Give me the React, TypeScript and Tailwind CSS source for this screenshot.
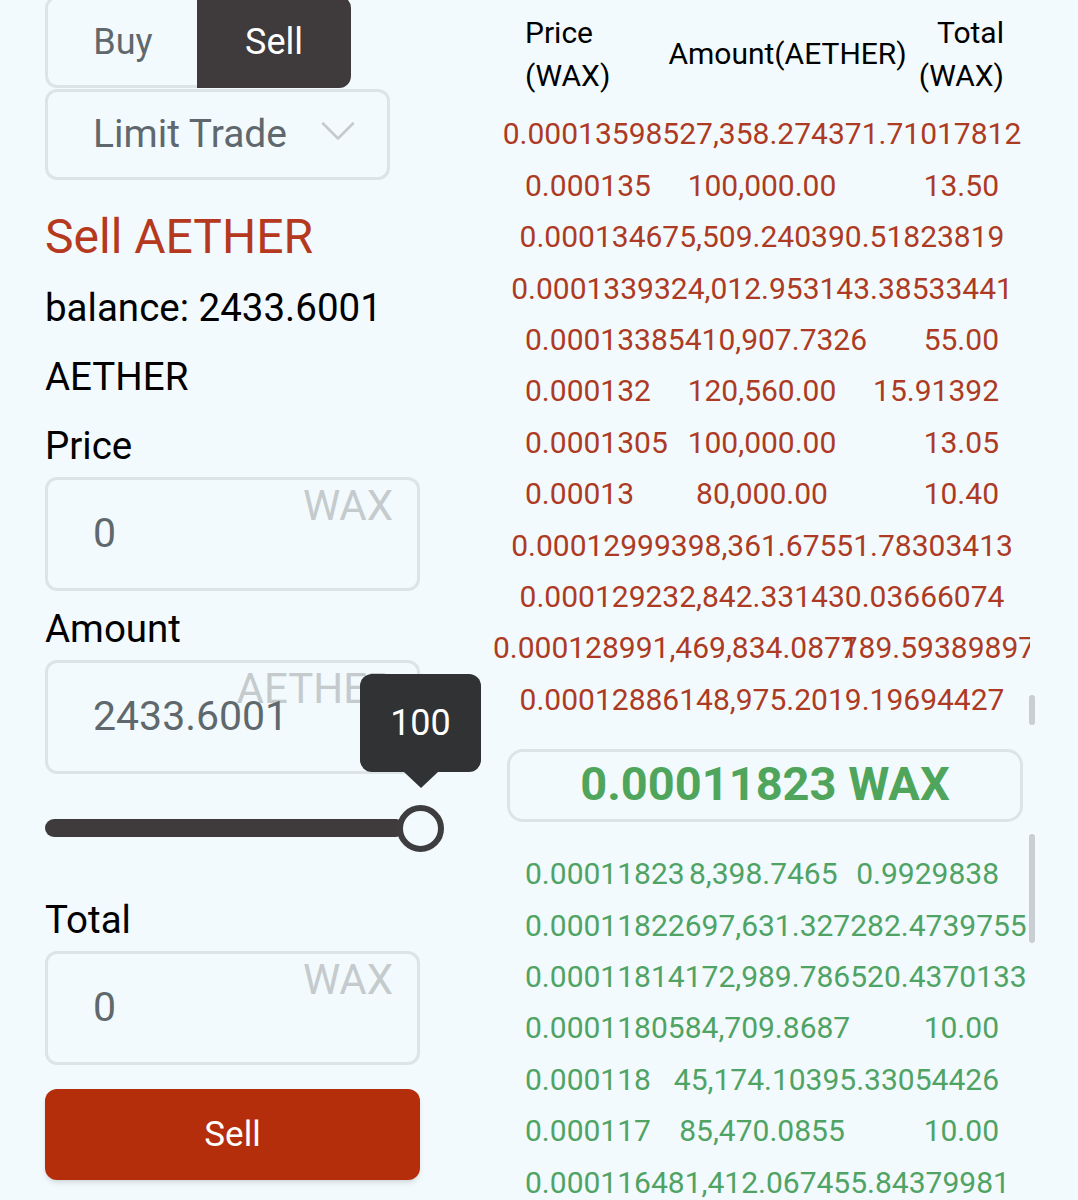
import React from "react";
import { ChevronDown } from "lucide-react";

type Row = { price: string; amount: string; total: string; totalClass?: string; rowClass?: string };

const asks: Row[] = [
  { price: "0.00013598", amount: "527,358.2743", total: "71.71017812" },
  { price: "0.000135", amount: "100,000.00", total: "13.50" },
  { price: "0.000134", amount: "675,509.2403", total: "90.51823819" },
  { price: "0.0001339", amount: "324,012.9531", total: "43.38533441" },
  { price: "0.00013385", amount: "410,907.7326", total: "55.00" },
  { price: "0.000132", amount: "120,560.00", total: "15.91392" },
  { price: "0.0001305", amount: "100,000.00", total: "13.05" },
  { price: "0.00013", amount: "80,000.00", total: "10.40" },
  { price: "0.00012999", amount: "398,361.6755", total: "1.78303413" },
  { price: "0.000129", amount: "232,842.3314", total: "30.03666074" },
  {
    price: "0.00012899",
    amount: "1,469,834.0877",
    total: "189.59389897",
    totalClass: "-ml-[16px]",
    rowClass: "translate-x-[2px]",
  },
  { price: "0.00012886", amount: "148,975.20", total: "19.19694427" },
];

const bids: Row[] = [
  { price: "0.00011823", amount: "8,398.7465", total: "0.9929838" },
  { price: "0.00011822", amount: "697,631.3272", total: "82.47397555" },
  { price: "0.00011814", amount: "172,989.7865", total: "20.43701337" },
  { price: "0.00011805", amount: "84,709.8687", total: "10.00" },
  { price: "0.000118", amount: "45,174.1039", total: "5.33054426" },
  { price: "0.000117", amount: "85,470.0855", total: "10.00" },
  { price: "0.000116", amount: "481,412.0674", total: "55.84379981" },
];

function FieldInput({ value, unit }: { value: string; unit: string }) {
  return (
    <div className="relative flex h-[114px] w-[375px] items-center rounded-xl border-[3px] border-[#dde4e7] pl-[45px] text-[41px] text-[#5f686c]">
      <span className="absolute right-[24px] top-[1px] text-[42px] leading-[50px] text-[#c5cacd]">{unit}</span>
      <span className="relative">{value}</span>
    </div>
  );
}

function OrderRow({ row, color, center }: { row: Row; color: string; center: boolean }) {
  return (
    <div
      className={`ml-[35px] flex h-[51.4px] w-[474px] items-center whitespace-nowrap text-[30px] ${color} ${
        center ? "justify-center" : "justify-start"
      } ${row.rowClass ?? ""}`}
    >
      <div className="basis-[158px] text-left">{row.price}</div>
      <div className="basis-[158px] text-center">{row.amount}</div>
      <div className={`basis-[158px] text-right ${row.totalClass ?? ""}`}>{row.total}</div>
    </div>
  );
}

export default function App() {
  return (
    <div className="flex h-[1200px] w-[1078px] overflow-hidden bg-[#f2fafd] font-['Roboto',sans-serif]">
      {/* order form */}
      <div className="relative w-[490px] shrink-0 pl-[45px] text-black">
        <div className="-mt-[4px] flex h-[92px] w-[306px] rounded-xl border-[3px] border-r-0 border-[#dde4e7] text-[36px]">
          <div className="flex w-[149px] items-center justify-center pl-[1px] text-[#5f686c]">Buy</div>
          <div className="-mb-[3px] -mt-[3px] flex w-[154px] items-center justify-center rounded-r-xl bg-[#3f3b3c] text-white">
            Sell
          </div>
        </div>
        <div className="mt-px flex h-[91px] w-[345px] items-center justify-between rounded-xl border-[3px] border-[#dde4e7] pl-[45px] pr-[19px] text-[39px] text-[#5f686c]">
          <span>Limit Trade</span>
          <ChevronDown className="-mt-[7px] h-[60px] w-[60px] text-[#c5cacd]" strokeWidth={1} />
        </div>

        <h2 className="mt-[21px] flex h-[72px] items-center text-[48px] text-[#b5391e]">Sell AETHER</h2>
        <div className="flex h-[69px] items-center pt-[1px] text-[38.5px]">balance: 2433.6001</div>
        <div className="flex h-[69px] items-center text-[38.5px]">AETHER</div>
        <div className="flex h-[66px] items-center pt-[3px] text-[38.5px]">Price</div>
        <FieldInput value="0" unit="WAX" />
        <div className="flex h-[69px] items-center pt-[6px] text-[38.5px]">Amount</div>
        <FieldInput value="2433.6001" unit="AETHER" />

        {/* slider */}
        <div className="relative h-[108px] w-[375px]">
          <div className="absolute left-0 top-[45px] h-[18px] w-[360px] rounded-full bg-[#3f3b3c]" />
          <div className="absolute left-[352px] top-[31px] h-[47px] w-[47px] rounded-full border-[6px] border-[#3d3d3f] bg-[#f2fafd]" />
          <div className="absolute left-[315px] -top-[100px] flex h-[98px] w-[121px] items-center justify-center rounded-xl bg-[#303234] text-[36px] text-white">
            100
            <div className="absolute -bottom-[16px] left-1/2 h-0 w-0 -translate-x-1/2 border-x-[17px] border-t-[16px] border-x-transparent border-t-[#303234]" />
          </div>
        </div>

        <div className="flex h-[69px] items-center pt-[6px] text-[38.5px]">Total</div>
        <FieldInput value="0" unit="WAX" />
        <button className="mt-[24px] flex h-[91px] w-[375px] items-center justify-center rounded-xl bg-[#b52e0c] pt-[1px] text-[35px] text-white shadow-md">
          Sell
        </button>
      </div>

      {/* order book */}
      <div className="relative w-[540px] shrink-0">
        <div className="ml-[35px] flex h-[108.3px] w-[479px] items-center text-[30px] leading-[43px] text-black">
          <div className="-mt-[1px] w-[144px]">
            Price
            <br />
            (WAX)
          </div>
          <div className="-mt-[1px] w-[237px] whitespace-nowrap text-center">Amount(AETHER)</div>
          <div className="-mt-[1px] w-[99px] text-right">
            Total
            <br />
            (WAX)
          </div>
        </div>

        <div className="overflow-hidden">
          {asks.map((row) => (
            <OrderRow key={row.price} row={row} color="text-[#ad3b24]" center />
          ))}
        </div>

        <div className="ml-[17px] mt-[24px] flex h-[73px] w-[516px] items-center justify-center rounded-2xl border-[3px] border-[#dde4e7] pb-[2px] text-[47px] font-bold text-[#4fa55b]">
          0.00011823 WAX
        </div>

        <div className="mt-[26px] w-[537px] overflow-hidden">
          {bids.map((row) => (
            <OrderRow key={row.price} row={row} color="text-[#4fa364]" center={false} />
          ))}
        </div>

        <div className="absolute left-[539px] top-[695px] h-[30px] w-[6px] rounded-full bg-[#c9ced3]" />
        <div className="absolute left-[539px] top-[834px] h-[109px] w-[6px] rounded-full bg-[#c9ced3]" />
      </div>
    </div>
  );
}
